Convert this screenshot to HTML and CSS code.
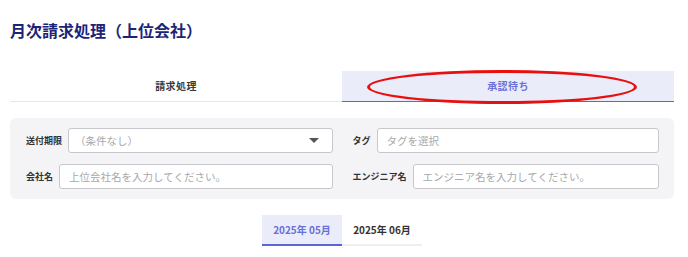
FILE: index.html
```html
<!DOCTYPE html>
<html lang="ja">
<head>
    <meta charset="UTF-8">
    <meta name="viewport" content="width=device-width, initial-scale=1.0">
    <title>月次請求処理（上位会社）</title>
    <link rel="stylesheet" href="styles.css">
</head>
<body>
    <div class="page">
        <h1 class="title">月次請求処理（上位会社）</h1>

        <div class="tabs">
            <div class="tab">請求処理</div>
            <div class="tab active">
                承認待ち
                <span class="mark"></span>
            </div>
        </div>

        <div class="filters">
            <div class="field">
                <label class="label">送付期限</label>
                <div class="select">
                    <span class="placeholder">（条件なし）</span>
                    <span class="caret"></span>
                </div>
            </div>
            <div class="field">
                <label class="label">タグ</label>
                <input class="input" type="text" placeholder="タグを選択">
            </div>
            <div class="field">
                <label class="label">会社名</label>
                <input class="input" type="text" placeholder="上位会社名を入力してください。">
            </div>
            <div class="field">
                <label class="label">エンジニア名</label>
                <input class="input" type="text" placeholder="エンジニア名を入力してください。">
            </div>
        </div>

        <div class="months">
            <div class="month active">2025年 05月</div>
            <div class="month">2025年 06月</div>
        </div>
    </div>
</body>
</html>
```

FILE: styles.css
```css
body {
    margin: 0;
    background-color: #fff;
    font-family: "Noto Sans CJK JP", "Noto Sans", sans-serif;
    color: #333;
}

.page {
    padding: 18px 14px 0 10px;
}

.title {
    margin: 0;
    font-size: 16px;
    line-height: 24px;
    font-weight: bold;
    color: #1c2477;
}

.tabs {
    display: flex;
    margin-top: 29px;
}

.tab {
    flex: 1;
    position: relative;
    height: 30px;
    line-height: 30px;
    text-align: center;
    font-size: 10px;
    font-weight: bold;
    letter-spacing: 0.4px;
    color: #3a3a3a;
    border-bottom: 1px solid #e6e6e8;
}

.tab.active {
    background-color: #ebecfa;
    color: #6770d6;
    border-bottom-color: #5b66d4;
}

/* red annotation ring around the active tab */
.tab .mark {
    position: absolute;
    left: 25px;
    top: -1px;
    width: 264px;
    height: 28px;
    border: 3px solid #e8100f;
    border-radius: 50%;
    pointer-events: none;
}

.filters {
    display: grid;
    grid-template-columns: 1fr 1fr;
    column-gap: 20px;
    row-gap: 11px;
    margin-top: 16px;
    padding: 10px 15px 10px 16px;
    background-color: #f4f4f6;
    border-radius: 6px;
}

.field {
    display: flex;
    align-items: center;
    gap: 6px;
}

.label {
    font-size: 9px;
    font-weight: bold;
    color: #333;
    white-space: nowrap;
}

.input,
.select {
    flex: 1;
    box-sizing: border-box;
    height: 25px;
    margin: 0;
    padding: 0 9px;
    border: 1px solid #c8c8cc;
    border-radius: 3px;
    background-color: #fff;
    font-family: inherit;
    font-size: 10.5px;
    color: #333;
    outline: none;
}

.input::placeholder {
    color: #a8a8ad;
}

.select {
    display: flex;
    align-items: center;
    justify-content: space-between;
    padding: 0 13px 0 6px;
}

.placeholder {
    font-size: 10.5px;
    color: #a8a8ad;
}

.caret {
    width: 0;
    height: 0;
    border-left: 5px solid transparent;
    border-right: 5px solid transparent;
    border-top: 5px solid #555;
}

.months {
    display: flex;
    justify-content: center;
    margin-top: 16px;
}

.month {
    width: 80px;
    height: 29px;
    line-height: 29px;
    text-align: center;
    font-size: 10px;
    font-weight: bold;
    color: #333;
    border-bottom: 2px solid #efeff1;
}

.month.active {
    background-color: #ebecfa;
    color: #6770d6;
    border-bottom-color: #5b66d4;
}
```
